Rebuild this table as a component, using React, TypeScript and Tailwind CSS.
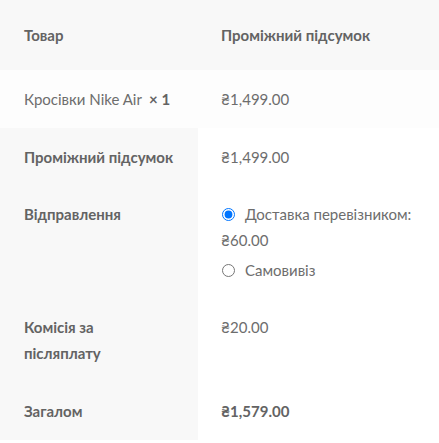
export default function App() {
  return (
    <div className="w-[439px] h-[443px] bg-white text-[15px] leading-[26px] text-[#6d6d6d] font-['Lato',sans-serif] overflow-hidden">
      <div className="flex bg-[#f8f8f8] font-bold text-[#636363]">
        <div className="w-[198px] pl-6 py-[22px]">Товар</div>
        <div className="flex-1 pl-[23px] py-[22px]">Проміжний підсумок</div>
      </div>
      <div className="flex bg-[#fdfdfd]">
        <div className="w-[198px] pl-6 py-4">
          Кросівки Nike Air <span className="font-bold text-[#636363]">&nbsp;× 1</span>
        </div>
        <div className="flex-1 pl-[23px] py-4">₴1,499.00</div>
      </div>
      <div className="flex">
        <div className="w-[198px] bg-[#f8f8f8] font-bold text-[#636363]">
          <div className="pl-6 pr-4 py-4">Проміжний підсумок</div>
          <div className="pl-6 pr-4 pt-[15px] pb-4 h-[113px]">Відправлення</div>
          <div className="pl-6 pr-4 py-[15px] h-[83px]">
            Комісія за
            <br />
            післяплату
          </div>
          <div className="pl-6 pr-4 py-4">Загалом</div>
        </div>
        <div className="flex-1 pl-[23px]">
          <div className="py-4">₴1,499.00</div>
          <div className="pt-[15px] pb-4 h-[113px]">
            <label className="flex items-center gap-[10px]">
              <input type="radio" name="ship" defaultChecked className="m-0 ml-[1px] w-[13px] h-[13px]" />
              <span>Доставка перевізником:</span>
            </label>
            <div>₴60.00</div>
            <label className="flex items-center gap-[10px] mt-1">
              <input type="radio" name="ship" className="m-0 ml-[1px] w-[13px] h-[13px]" />
              <span>Самовивіз</span>
            </label>
          </div>
          <div className="py-[15px] h-[83px]">₴20.00</div>
          <div className="py-4 font-bold text-[#636363]">₴1,579.00</div>
        </div>
      </div>
    </div>
  );
}
